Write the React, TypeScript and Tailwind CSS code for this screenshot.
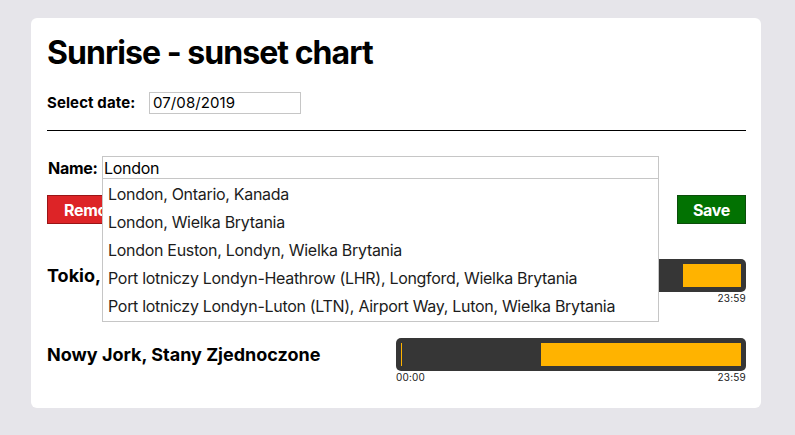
import { useState } from "react";

type Segment = { from: number; to: number };

const cities: { name: string; segments: Segment[] }[] = [
  {
    name: "Tokio, Japonia",
    segments: [
      { from: 0, to: 0.003 },
      { from: 0.829, to: 1 },
    ],
  },
  {
    name: "Nowy Jork, Stany Zjednoczone",
    segments: [
      { from: 0, to: 0.003 },
      { from: 0.412, to: 1 },
    ],
  },
];

const suggestions = [
  "London, Ontario, Kanada",
  "London, Wielka Brytania",
  "London Euston, Londyn, Wielka Brytania",
  "Port lotniczy Londyn-Heathrow (LHR), Longford, Wielka Brytania",
  "Port lotniczy Londyn-Luton (LTN), Airport Way, Luton, Wielka Brytania",
];

const DayBar = ({ segments }: { segments: Segment[] }) => (
  <div className="w-[350px]">
    <div className="h-[33px] rounded-[5px] bg-[#363636] p-[5px]">
      <div className="relative h-full w-full">
        {segments.map((s, i) => (
          <div
            key={i}
            className="absolute top-0 bottom-0 bg-[#ffb300]"
            style={{
              left: `${s.from * 100}%`,
              width: `max(1px, ${(s.to - s.from) * 100}%)`,
            }}
          />
        ))}
      </div>
    </div>
    <div className="flex justify-between text-[10px] leading-[13px] tracking-[0.2px] text-[#222]">
      <span>00:00</span>
      <span>23:59</span>
    </div>
  </div>
);

export default function App() {
  const [date, setDate] = useState("07/08/2019");
  const [name, setName] = useState("London");

  return (
    <div className="min-h-screen bg-[#e6e5ea] pl-[31px] pt-[18px] font-['Inter',sans-serif] tracking-[-0.3px] text-black">
      <div className="h-[390px] w-[730px] rounded-[6px] bg-white pl-4 pr-[15px] pt-4">
        <h1 className="text-[32px] font-bold leading-[38px] tracking-[-0.95px]">
          Sunrise - sunset chart
        </h1>

        {/* Date picker */}
        <div className="mt-5 flex h-[22px] items-center">
          <label className="w-[102px] text-[15px] font-bold tracking-[0.1px]">Select date:</label>
          <input
            value={date}
            onChange={(e) => setDate(e.target.value)}
            className="h-[22px] w-[152px] border border-[#c6c6c6] px-[3px] text-[15px] tracking-[0.1px] outline-none"
          />
        </div>

        <hr className="mt-4 border-0 border-t border-black" />

        {/* Search */}
        <div className="relative mt-[25px] flex h-[23px] items-center">
          <label className="w-[55px] pl-[1px] text-[16px] font-bold">Name:</label>
          <input
            value={name}
            onChange={(e) => setName(e.target.value)}
            className="h-[23px] w-[557px] border border-[#c6c6c6] px-[1px] text-[16px] outline-none"
          />
          <ul className="absolute top-[23px] left-[55px] z-10 w-[557px] border border-t-0 border-[#c6c6c6] bg-white py-[1px]">
            {suggestions.map((s) => (
              <li key={s} className="h-[28px] px-[5px] text-[16px] leading-[28px] text-[#1c1c1c]">
                {s}
              </li>
            ))}
          </ul>
        </div>

        <div className="mt-4 flex justify-between">
          <button className="h-[29px] border border-[#9a1416] bg-[#dd2427] px-4 text-[16px] font-bold text-white">
            Remove
          </button>
          <button className="h-[29px] w-[69px] border border-[#0b4d0b] bg-[#027202] text-[16px] font-bold text-white">
            Save
          </button>
        </div>

        {/* Day length rows */}
        <div className="mt-[35px] flex flex-col gap-[33px]">
          {cities.map((c) => (
            <div key={c.name} className="flex items-start justify-between">
              <div className="flex h-[33px] items-center text-[18px] font-bold tracking-normal">
                {c.name}
              </div>
              <DayBar segments={c.segments} />
            </div>
          ))}
        </div>
      </div>
    </div>
  );
}
